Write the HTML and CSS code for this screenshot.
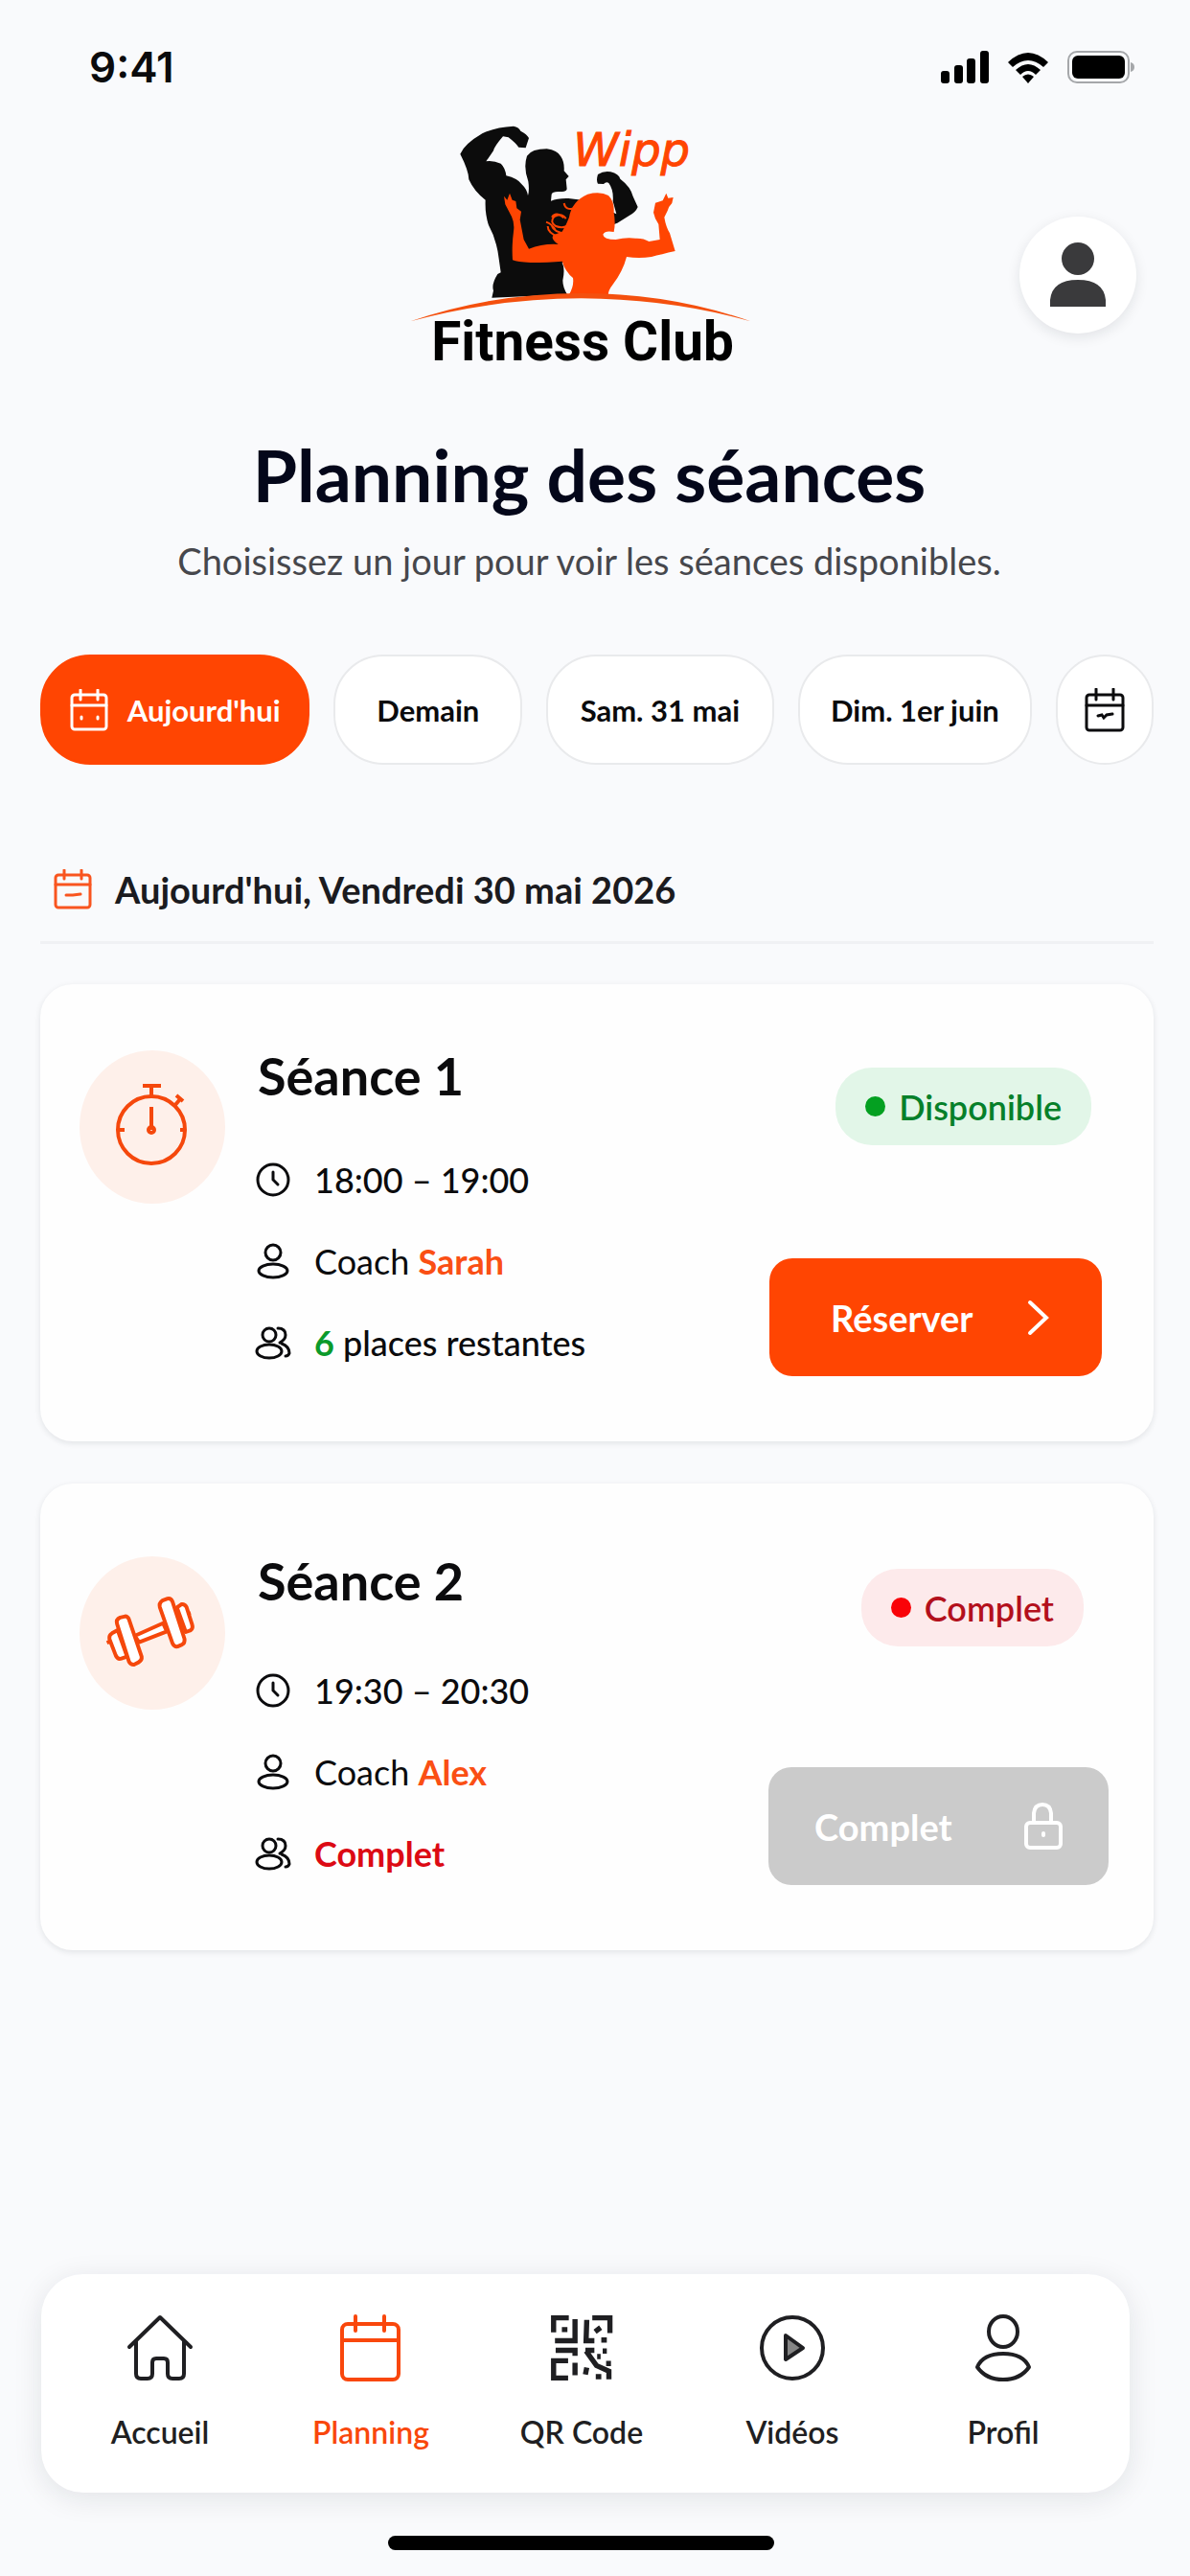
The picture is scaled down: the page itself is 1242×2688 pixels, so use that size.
FILE: index.html
```html
<!DOCTYPE html>
<html lang="fr">
<head>
    <meta charset="utf-8">
    <meta name="viewport" content="width=device-width, initial-scale=1">
    <title>Planning des séances</title>
    <link rel="stylesheet" href="styles.css">
</head>
<body>
    <div class="status-bar">
        <span class="status-time">9:41</span>
        <div class="status-icons">
            <svg width="50" height="34" viewBox="0 0 50 34">
                <rect x="0" y="21" width="9" height="13" rx="3"/>
                <rect x="14" y="15" width="9" height="19" rx="3"/>
                <rect x="27" y="8" width="9" height="26" rx="3"/>
                <rect x="41" y="0" width="9" height="34" rx="3"/>
            </svg>
            <svg width="44" height="34" viewBox="0 0 44 34">
                <path d="M1 12Q22-8 43 12L38 17Q22 3 6 17Z"/>
                <path d="M9 20Q22 8 35 20L30 25Q22 17 14 25Z"/>
                <path d="M16 27Q22 22 28 27L22 34Z"/>
            </svg>
            <svg width="70" height="34" viewBox="0 0 70 34">
                <rect x="1" y="1" width="63" height="32" rx="9" fill="none" stroke="#a5a7aa" stroke-width="2"/>
                <rect x="5" y="5" width="55" height="24" rx="6"/>
                <path d="M66 12Q70 13 70 17T66 22Z" fill="#a5a7aa"/>
            </svg>
        </div>
    </div>

    <header class="header">
        <svg class="logo" viewBox="0 0 1260 870" role="img" aria-label="Wipp Fitness Club">
            <path fill="#0c0c0c" d="M340 602L345 580Q338 560 358 528L368 523L362 480Q355 420 330 375Q318 340 320 296Q285 270 268 232Q268 205 241 152Q255 120 310 88Q350 68 408 65Q425 68 430 80Q450 90 456 102L446 133L424 131Q415 118 392 100L375 97Q348 128 345 142L322 175Q345 172 368 182Q382 195 385 220Q420 228 435 248Q450 262 453 282Q458 265 454 238Q438 195 450 158Q465 136 512 136Q545 140 556 160Q568 178 566 205L581 222L572 232L575 262Q572 272 555 270Q530 268 527 278L525 299Q545 290 580 291Q610 294 640 300L730 340L719 300Q722 265 706 243Q698 238 690 246L672 245Q666 235 672 216Q690 204 712 208Q738 215 742 230Q775 255 782 285L797 318Q790 335 770 345L733 368L700 380L620 480L560 492Q570 510 562 548Q562 568 576 592Z"/>
            <g fill="none" stroke="#ff4502" stroke-width="6">
                <path d="M600 322Q570 330 566 306M572 355Q560 335 535 348Q520 365 540 378Q560 385 575 378M565 352Q540 330 528 350M510 365Q530 372 540 392M515 378Q515 400 550 412M528 378Q535 398 570 400"/>
            </g>
            <path fill="#ff4502" d="M402 348L382 310L378 284L388 296L396 275L404 296L415 300L418 322L432 332L428 358L440 420L456 449Q500 432 548 435Q520 415 535 405L560 395Q575 370 582 350Q590 300 640 278Q680 268 705 282Q724 300 722 335Q728 370 722 396Q695 390 688 404Q690 420 728 420Q760 412 790 416Q815 415 832 426L866 420L862 372Q850 355 846 335L852 305L875 298L886 275L892 290L908 288L904 306Q892 318 890 330L880 350Q885 380 897 400L914 456Q870 466 840 474Q800 480 762 474Q750 520 718 562Q705 578 704 594L582 592Q598 565 594 540Q570 520 560 488Q520 492 460 492Q420 490 405 484Q402 440 408 395Q412 370 402 348Z"/>
            <path fill="#f4500e" d="M85 676Q340 588 620 588Q900 588 1150 676Q900 606 620 604Q340 606 85 676Z"/>
            <text class="logo-brand" x="595" y="188">Wipp</text>
            <text class="logo-name" x="624" y="798">Fitness Club</text>
        </svg>
        <button class="avatar" type="button" aria-label="Mon compte">
            <svg width="58" height="68" viewBox="0 0 58 68">
                <ellipse cx="29" cy="17" rx="17" ry="17"/>
                <path d="M0 67V60Q2 39 29 39T58 60V67Z"/>
            </svg>
        </button>
    </header>

    <main>
        <h1>Planning des séances</h1>
        <p class="subtitle">Choisissez un jour pour voir les séances disponibles.</p>

        <div class="days">
            <button class="day day-active" type="button">
                <svg class="line-icon" width="40" height="44" viewBox="0 0 40 44">
                    <rect x="2" y="6" width="36" height="36" rx="3"/>
                    <path d="M2 17H38M11 1V11M29 1V11M12 29v2M29 29v2"/>
                </svg>
                Aujourd'hui
            </button>
            <button class="day" type="button">Demain</button>
            <button class="day" type="button">Sam. 31 mai</button>
            <button class="day" type="button">Dim. 1er juin</button>
            <button class="day day-calendar" type="button" aria-label="Choisir une date">
                <svg class="line-icon" width="42" height="46" viewBox="0 0 42 46">
                    <rect x="2" y="7" width="38" height="37" rx="3"/>
                    <path d="M2 18H40M12 1V12M30 1V12M14 29L18 28L20 31L23 28L29 27"/>
                </svg>
            </button>
        </div>

        <h2 class="date">
            <svg class="line-icon" width="40" height="42" viewBox="0 0 40 42">
                <rect x="2" y="6" width="36" height="34" rx="3"/>
                <path d="M2 16H38M11 1V10M29 1V10M13 27H20L28 26"/>
            </svg>
            Aujourd'hui, Vendredi 30 mai 2026
        </h2>

        <section class="session">
            <svg class="session-icon" viewBox="0 0 152 158">
                <circle cx="75" cy="82" r="35"/>
                <path d="M66 36H85M75 36V47M75 58V82M99 57L105 50M101 46L108 52M40 82H47M105 82H110"/>
                <circle cx="75" cy="82" r="3"/>
            </svg>
            <div class="session-info">
                <h3>Séance 1</h3>
                <ul>
                    <li class="time">
                        <svg width="38" height="38" viewBox="0 0 38 38"><circle cx="19" cy="19" r="16"/><path d="M19 11V19L24 24"/></svg>
                        18:00 – 19:00
                    </li>
                    <li>
                        <svg width="38" height="38" viewBox="0 0 38 38"><circle cx="19" cy="10" r="8"/><ellipse cx="19" cy="29" rx="15" ry="7"/></svg>
                        <span>Coach <strong class="coach">Sarah</strong></span>
                    </li>
                    <li class="places">
                        <svg width="38" height="38" viewBox="0 0 38 38"><circle cx="15" cy="11" r="7"/><ellipse cx="15" cy="28" rx="13" ry="7"/><path d="M24 4Q32 4 32 11Q32 16 26 19M28 20Q36 23 36 30Q35 33 32 33"/></svg>
                        <span><strong class="free">6</strong> places restantes</span>
                    </li>
                </ul>
            </div>
            <div class="session-side">
                <span class="badge badge-free">Disponible</span>
                <button class="book" type="button">
                    Réserver
                    <svg width="24" height="38" viewBox="0 0 24 38"><path d="M3 3L20 19L3 35"/></svg>
                </button>
            </div>
        </section>

        <section class="session session-full">
            <svg class="session-icon" viewBox="0 0 456 486">
                <g fill="#fff" stroke-width="12">
                    <path d="M172 252L262 212L274 238L186 272Z"/>
                    <path d="M100 244L118 234L148 318L130 324Q118 328 112 314L92 262Q90 250 100 244Z"/>
                    <path d="M84 274L93 270M349 178L340 182"/>
                    <path d="M116 214Q112 200 126 194L142 190Q150 190 154 200L194 318Q196 330 184 336L170 343Q160 344 154 334Z"/>
                    <path d="M252 162Q248 148 260 140L276 134Q288 132 292 144L330 262Q332 274 322 280L308 286Q298 288 292 276Z"/>
                    <path d="M306 162L320 152Q330 150 336 160L354 216Q358 228 350 234L334 240Z"/>
                </g>
            </svg>
            <div class="session-info">
                <h3>Séance 2</h3>
                <ul>
                    <li class="time">
                        <svg width="38" height="38" viewBox="0 0 38 38"><circle cx="19" cy="19" r="16"/><path d="M19 11V19L24 24"/></svg>
                        19:30 – 20:30
                    </li>
                    <li>
                        <svg width="38" height="38" viewBox="0 0 38 38"><circle cx="19" cy="10" r="8"/><ellipse cx="19" cy="29" rx="15" ry="7"/></svg>
                        <span>Coach <strong class="coach">Alex</strong></span>
                    </li>
                    <li class="places">
                        <svg width="38" height="38" viewBox="0 0 38 38"><circle cx="15" cy="11" r="7"/><ellipse cx="15" cy="28" rx="13" ry="7"/><path d="M24 4Q32 4 32 11Q32 16 26 19M28 20Q36 23 36 30Q35 33 32 33"/></svg>
                        <strong class="full">Complet</strong>
                    </li>
                </ul>
            </div>
            <div class="session-side">
                <span class="badge badge-full">Complet</span>
                <button class="book" type="button" disabled>
                    Complet
                    <svg width="40" height="50" viewBox="0 0 40 50"><rect x="2" y="21" width="36" height="26" rx="4"/><path d="M10 21V11Q11 2 19 2T28 11V21M20 32v2"/></svg>
                </button>
            </div>
        </section>
    </main>

    <nav class="tabs">
        <a href="#">
            <svg width="70" height="70" viewBox="0 0 70 70"><path d="M3 34L35 3L67 34M10 28V62Q10 67 15 67H22Q27 67 27 62V50Q27 46 31 46H39Q43 46 43 50V62Q43 67 48 67H55Q60 67 60 62V28"/></svg>
            Accueil
        </a>
        <a href="#" class="tab-active" aria-current="page">
            <svg width="70" height="70" viewBox="0 0 70 70"><rect x="5" y="10" width="59" height="58" rx="6"/><path d="M5 27H64M19 2V17M49 2V17"/></svg>
            Planning
        </a>
        <a href="#">
            <svg class="qr" width="70" height="70" viewBox="28 28 186 194">
                <path d="M40 80V38H84M152 38H203V82M64 72H80M102 42V104H44M136 44L134 104H158M160 78L176 66M178 102H194M46 132H102V148M82 162H40V212H82M102 168V204M136 182L132 202M132 132H158M182 134H194M134 134L164 176L200 192V216M166 150H176M192 170H206M162 208H178"/>
            </svg>
            QR Code
        </a>
        <a href="#">
            <svg width="70" height="70" viewBox="0 0 70 70"><circle cx="35" cy="35" r="32"/><path d="M28 22L46 35L28 47Z" fill="#858585"/></svg>
            Vidéos
        </a>
        <a href="#">
            <svg width="70" height="70" viewBox="0 0 70 70"><ellipse cx="35" cy="18" rx="15" ry="16"/><path d="M8 55Q14 41 35 41T62 55Q53 68 35 68T8 55Z"/></svg>
            Profil
        </a>
    </nav>
    <div class="home-bar"></div>
</body>
</html>
```
FILE: styles.css
```css
* {
    box-sizing: border-box;
}
body {
    margin: 0;
    padding: 0 38px 0 42px;
    min-height: 100vh;
    display: flex;
    flex-direction: column;
    background: #f9fafc;
    color: #0b0b0d;
    font-family: Lato, "Noto Sans", sans-serif;
    font-size: 36px;
}
svg {
    flex-shrink: 0;
}
button {
    font-family: inherit;
    color: inherit;
    border: 0;
    cursor: pointer;
}

/* Status bar */
.status-bar {
    display: flex;
    justify-content: space-between;
    align-items: center;
    height: 130px;
    padding: 10px 20px 0 51px;
}
.status-time {
    font-family: Inter, sans-serif;
    font-size: 44px;
    font-weight: 600;
}
.status-icons {
    display: flex;
    gap: 19px;
}

/* Logo and account */
.header {
    position: relative;
    display: flex;
    justify-content: center;
}
.logo {
    width: 420px;
    height: 290px;
    margin-top: -20px;
    margin-right: 26px;
}
.logo-brand {
    font-family: "DejaVu Sans", sans-serif;
    font-size: 144px;
    font-style: italic;
    fill: #ff4502;
    stroke: #ff4502;
    stroke-width: 3;
}
.logo-name {
    font-family: Roboto, sans-serif;
    font-size: 170px;
    font-weight: 700;
    text-anchor: middle;
    fill: #000;
}
.avatar {
    position: absolute;
    right: 18px;
    top: 96px;
    width: 122px;
    height: 122px;
    padding: 0;
    border-radius: 50%;
    background: #fff;
    box-shadow: 0 4px 14px rgba(20, 25, 40, 0.1);
    display: flex;
    align-items: center;
    justify-content: center;
}
.avatar svg {
    fill: #3a3a3c;
}

/* Title */
h1 {
    margin: 50px 16px 0 0;
    text-align: center;
    color: #04071a;
    font-size: 75px;
    line-height: 90px;
    font-weight: 700;
}
.subtitle {
    margin: 23px 16px 0 0;
    text-align: center;
    color: #46474c;
    font-size: 38px;
    line-height: 44px;
}

/* Day picker */
.line-icon {
    fill: none;
    stroke: currentColor;
    stroke-width: 3;
    stroke-linecap: round;
}
.days {
    display: grid;
    grid-template-columns: 282fr 197fr 238fr 245fr 102fr;
    gap: 25px;
    margin-top: 76px;
}
.day {
    height: 115px;
    padding: 0;
    display: flex;
    align-items: center;
    justify-content: center;
    gap: 20px;
    border: 2px solid #e9eaec;
    border-radius: 52px;
    background: #fff;
    font-size: 31px;
    font-weight: 700;
}
.day-active {
    border-color: #ff4502;
    background: #ff4502;
    color: #fff;
}
.date {
    display: flex;
    align-items: center;
    gap: 24px;
    margin: 98px 0 0;
    padding: 0 14px 22px;
    border-bottom: 3px solid #f0f1f4;
    font-size: 38px;
    line-height: 64px;
    font-weight: 700;
    color: #1b1b1f;
}
.date .line-icon {
    color: #f9551f;
}

/* Sessions */
.session {
    display: grid;
    grid-template-columns: 152px 1fr 347px;
    column-gap: 31px;
    min-height: 477px;
    margin-top: 42px;
    padding: 0 54px 0 41px;
    border-radius: 34px;
    background: #fefefe;
    box-shadow: 0 2px 6px rgba(20, 25, 40, 0.1);
}
.session-icon {
    width: 152px;
    height: 160px;
    margin-top: 69px;
    border-radius: 50%;
    background: #fef0ea;
    fill: none;
    stroke: #f5480c;
    stroke-width: 4;
    stroke-linejoin: round;
}
h3 {
    margin: 64px 0 0 3px;
    font-size: 54px;
    line-height: 64px;
    font-weight: 700;
}
ul {
    margin: 33px 0 0;
    padding: 0;
    list-style: none;
}
li {
    display: flex;
    align-items: center;
    gap: 24px;
    height: 85px;
}
li svg {
    fill: none;
    stroke: currentColor;
    stroke-width: 3;
    stroke-linecap: round;
}
.time,
.places {
    font-weight: 500;
}
.coach {
    color: #fa4f14;
}
.free {
    color: #0b9a2b;
}
.full {
    color: #dc0a14;
}
.session-side {
    display: flex;
    flex-direction: column;
}
.badge {
    align-self: flex-end;
    display: flex;
    align-items: center;
    gap: 14px;
    height: 81px;
    margin: 87px 11px 0 0;
    padding: 0 31px;
    border-radius: 38px;
    font-weight: 600;
}
.badge::before {
    content: "";
    width: 21px;
    height: 21px;
    border-radius: 50%;
    background: currentColor;
}
.badge-free {
    background: #e2f6e8;
    color: #06802a;
}
.badge-free::before {
    background: #04a021;
}
.badge-full {
    background: #fdeaeb;
    color: #b3101c;
}
.badge-full::before {
    background: #f90308;
}
.book {
    display: flex;
    align-items: center;
    justify-content: space-between;
    height: 123px;
    margin-top: 118px;
    padding: 0 54px 0 64px;
    border-radius: 24px;
    background: #ff4502;
    color: #fff;
    font-size: 38px;
    font-weight: 700;
}
.book svg {
    fill: none;
    stroke: currentColor;
    stroke-width: 4;
    stroke-linecap: round;
}
.book:disabled {
    padding: 0 48px;
    background: #cbcbcb;
    cursor: default;
}
.session-full {
    grid-template-columns: 152px 1fr 355px;
    min-height: 487px;
    margin-top: 44px;
    padding-right: 47px;
}
.session-full .session-icon {
    margin-top: 76px;
}
.session-full h3 {
    margin-top: 70px;
}
.session-full ul {
    margin-top: 39px;
}
.session-full .badge {
    margin: 89px 26px 0 0;
}
.session-full .book {
    margin-top: 126px;
}

/* Bottom navigation */
.tabs {
    display: grid;
    grid-template-columns: repeat(5, 1fr);
    margin: auto 25px 0 1px;
    padding: 42px 22px 38px 14px;
    border-radius: 44px;
    background: #fff;
    box-shadow: 0 6px 30px rgba(20, 25, 40, 0.1);
}
.tabs a {
    display: flex;
    flex-direction: column;
    align-items: center;
    gap: 28px;
    color: #1f1f22;
    font-size: 32px;
    line-height: 50px;
    font-weight: 600;
    text-decoration: none;
}
.tabs svg {
    fill: none;
    stroke: currentColor;
    stroke-width: 4;
    stroke-linecap: round;
    stroke-linejoin: round;
}
.tabs .qr {
    stroke-width: 15;
    stroke-linecap: butt;
    stroke-linejoin: miter;
}
.tabs .tab-active {
    color: #f9470c;
}
.home-bar {
    align-self: center;
    width: 403px;
    height: 15px;
    margin: 45px 34px 27px 0;
    border-radius: 8px;
    background: #000;
}
```
